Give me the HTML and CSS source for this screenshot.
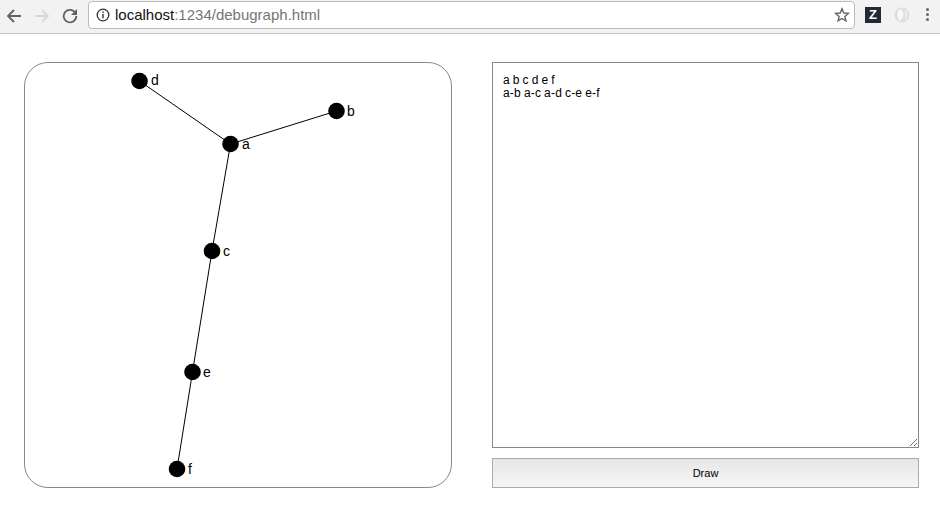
FILE: index.html
```html
<!DOCTYPE html>
<html lang="en">

<head>
    <meta charset="UTF-8">
    <meta name="viewport" content="width=device-width, initial-scale=1.0">
    <title>debugraph</title>
    <link rel="stylesheet" href="styles.css">
</head>

<body>
    <header class="toolbar">
        <div class="nav-buttons">
            <svg class="icon" viewBox="0 0 16 16"><path d="M15 8H2.5M8 2L2 8l6 6" fill="none" stroke="#5f6368" stroke-width="1.8"/></svg>
            <svg class="icon" viewBox="0 0 16 16"><path d="M1 8h12.500M8 2l6 6-6 6" fill="none" stroke="#d8d8d8" stroke-width="1.8"/></svg>
            <svg class="icon" viewBox="0 0 16 16"><path d="M13.600 5.200A6.300 6.300 0 1 0 14.300 8" fill="none" stroke="#5f6368" stroke-width="1.8"/><path d="M15 1v6H9z" fill="#5f6368"/></svg>
        </div>
        <div class="omnibox">
            <svg class="info" viewBox="0 0 14 14"><circle cx="7" cy="7" r="5.800" fill="none" stroke="#333" stroke-width="1.3"/><path d="M7 6v4.200M7 3.600v1.400" stroke="#333" stroke-width="1.4"/></svg>
            <span class="url"><span class="host">localhost</span>:1234/debugraph.html</span>
            <svg class="star" viewBox="0 0 16 16"><path d="M8 1.800l1.800 4.200 4.500.4-3.400 3 1 4.500L8 11.500l-3.900 2.400 1-4.500-3.400-3 4.500-.4z" fill="none" stroke="#5f6368" stroke-width="1.4"/></svg>
        </div>
        <div class="extensions">
            <span class="ext-z">Z</span>
            <svg class="ext-ghost" viewBox="0 0 18 18"><circle cx="9" cy="9" r="7.500" fill="#dedede"/><path d="M7 3c4 1 5 8 0 12c-3-2-4-9 0-12z" fill="#f7f7f7"/><path d="M11.500 3.500c3 2 3 9 0 11c1.500-3 1.500-8 0-11z" fill="#f7f7f7"/></svg>
            <span class="menu-dots"><i></i><i></i><i></i></span>
        </div>
    </header>

    <main class="page">
        <div class="graph-box">
            <svg class="graph" viewBox="0 0 426 424">
                <g class="edges">
                    <line x1="205.500" y1="81" x2="311.500" y2="48"/>
                    <line x1="205.500" y1="81" x2="187" y2="188"/>
                    <line x1="205.500" y1="81" x2="114.500" y2="18"/>
                    <line x1="187" y1="188" x2="167.500" y2="309"/>
                    <line x1="167.500" y1="309" x2="152" y2="406"/>
                </g>
                <g class="nodes">
                    <circle cx="205.500" cy="81" r="8.300"/>
                    <circle cx="311.500" cy="48" r="8.300"/>
                    <circle cx="187" cy="188" r="8.300"/>
                    <circle cx="114.500" cy="18" r="8.300"/>
                    <circle cx="167.500" cy="309" r="8.300"/>
                    <circle cx="152" cy="406" r="8.300"/>
                </g>
                <g class="labels">
                    <text x="217" y="86">a</text>
                    <text x="322" y="53">b</text>
                    <text x="198" y="193">c</text>
                    <text x="126" y="22">d</text>
                    <text x="178" y="314">e</text>
                    <text x="163" y="411">f</text>
                </g>
            </svg>
        </div>
        <div class="editor">
            <textarea class="source" spellcheck="false">a b c d e f
a-b a-c a-d c-e e-f</textarea>
            <button class="draw" type="button">Draw</button>
        </div>
    </main>
</body>

</html>
```

FILE: styles.css
```css
body {
    margin: 0;
    background: #fff;
    font-family: "Liberation Sans", Arial, sans-serif;
    overflow: hidden;
}

.toolbar {
    display: flex;
    align-items: center;
    height: 33px;
    background: #f2f2f2;
    border-bottom: 1px solid #c4c4c4;
}

.nav-buttons {
    display: flex;
    align-items: center;
    gap: 12px;
    width: 88px;
    padding: 0 0 2px 6px;
    box-sizing: border-box;
}

.icon {
    width: 16px;
    height: 16px;
}

.omnibox {
    flex: none;
    display: flex;
    align-items: center;
    box-sizing: border-box;
    width: 767px;
    height: 28px;
    padding: 0 4px 0 7px;
    margin-bottom: 4px;
    background: #fff;
    border: 1px solid #bcbcbc;
    border-radius: 4px;
}

.info {
    width: 14px;
    height: 14px;
    margin-right: 5px;
}

.url {
    flex: 1;
    font-size: 15px;
    color: #757575;
}

.host {
    color: #111;
}

.star {
    width: 16px;
    height: 16px;
}

.extensions {
    display: flex;
    align-items: center;
    margin-left: 10px;
    padding-bottom: 4px;
}

.ext-z {
    width: 16px;
    height: 16px;
    background: #1f2a36;
    color: #fff;
    font-size: 13px;
    font-weight: bold;
    line-height: 16px;
    text-align: center;
}

.ext-ghost {
    width: 18px;
    height: 18px;
    margin-left: 12px;
}

.menu-dots {
    display: flex;
    flex-direction: column;
    gap: 2px;
    margin-left: 15px;
}

.menu-dots i {
    width: 3px;
    height: 3px;
    border-radius: 50%;
    background: #666;
}

.page {
    display: grid;
    grid-template-columns: 428px 427px;
    column-gap: 40px;
    padding: 28px 0 0 24px;
}

.graph-box {
    box-sizing: border-box;
    height: 426px;
    border: 1px solid #888;
    border-radius: 24px;
}

.graph {
    display: block;
    width: 426px;
    height: 424px;
}

.edges line {
    stroke: #000;
    stroke-width: 1;
}

.nodes circle {
    fill: #000;
}

.labels text {
    font-size: 14px;
    fill: #000;
}

.editor {
    display: flex;
    flex-direction: column;
    gap: 10px;
    height: 426px;
}

.source {
    flex: 1;
    box-sizing: border-box;
    margin: 0;
    padding: 11px 10px 10px;
    border: 1px solid #888;
    border-radius: 0;
    outline: none;
    font-family: "Liberation Sans", Arial, sans-serif;
    font-size: 12px;
    letter-spacing: 0.2px;
    word-spacing: -0.6px;
    line-height: 13px;
    color: #000;
    resize: both;
}

.draw {
    box-sizing: border-box;
    height: 30px;
    border: 1px solid #aaa;
    background: linear-gradient(#e6e6e6, #f6f6f6);
    font-family: "Liberation Sans", Arial, sans-serif;
    font-size: 11px;
    color: #000;
}
```
